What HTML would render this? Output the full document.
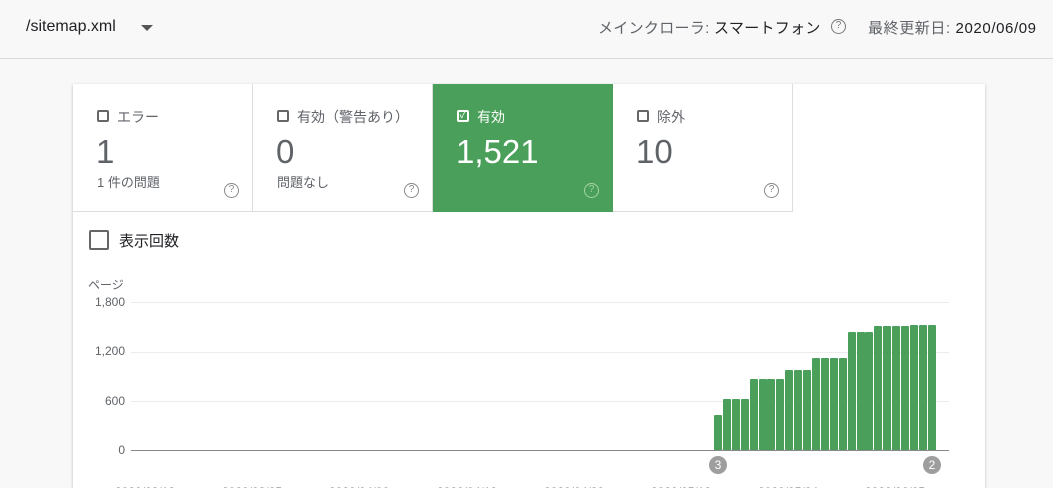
<!DOCTYPE html>
<html style="width:1053px;height:488px;overflow:hidden"><head><meta charset="utf-8"><style>
*{margin:0;padding:0;box-sizing:border-box}
body{width:1053px;height:488px;overflow:hidden;background:#f8f8f8;font-family:"Liberation Sans","Noto Sans CJK JP",sans-serif;position:relative;color:#202124}
.a{position:absolute;white-space:nowrap}
.top{position:absolute;left:0;top:0;width:1053px;height:59px;border-bottom:1px solid #dadada;background:#f8f8f8}
.card{position:absolute;left:73px;top:84px;width:912px;height:404px;background:#fff;box-shadow:0 1px 3px rgba(0,0,0,.25)}
.tile{position:absolute;top:0;height:128px;width:180px;border-right:1px solid #ddd;border-bottom:1px solid #ddd}
.cb{position:absolute;left:24px;top:26px;width:12px;height:12px;border:2px solid #666;border-radius:2px}
.lbl{position:absolute;left:44px;top:23px;font-size:14px;color:#5f6368}
.num{position:absolute;left:23px;top:49px;font-size:33px;color:#5f6368}
.sub{position:absolute;left:24px;top:88px;font-size:13px;color:#5f6368}
.q{position:absolute;left:151px;top:99px;width:15px;height:15px;border:1.5px solid #888;border-radius:50%;font-size:10px;line-height:12px;text-align:center;color:#888}
.g{position:absolute;left:131px;width:818px;height:1px;background:#ececec}
.yl{position:absolute;width:60px;left:65px;text-align:right;font-size:12px;color:#5f6368}
.bar{position:absolute;width:8px;background:#4a9f5a;border-radius:1px 1px 0 0}
.xl{position:absolute;top:485px;font-size:12px;color:#5f6368}
.mk{position:absolute;top:456px;width:18px;height:18px;border-radius:50%;background:#9e9e9e;color:#fff;font-size:12px;line-height:18px;text-align:center}
</style></head><body>
<div class="top">
<div class="a" style="left:26px;top:18px;font-size:16px;color:#202124">/sitemap.xml</div>
<div class="a" style="left:141px;top:25px;width:0;height:0;border-left:6px solid transparent;border-right:6px solid transparent;border-top:6px solid #555"></div>
<div class="a" style="left:598px;top:17px;font-size:15px;color:#5f6368;letter-spacing:0.3px">メインクローラ: <span style="color:#202124">スマートフォン</span></div>
<div class="a" style="left:831px;top:19px;width:15px;height:15px;border:1.5px solid #777;border-radius:50%;font-size:10px;line-height:12px;text-align:center;color:#777">?</div>
<div class="a" style="left:868px;top:17px;font-size:15px;color:#5f6368;letter-spacing:0.6px">最終更新日: <span style="color:#202124">2020/06/09</span></div>
</div>
<div class="card">
<div class="tile" style="left:0"><div class="cb"></div><div class="lbl">エラー</div><div class="num">1</div><div class="sub">1 件の問題</div><div class="q">?</div></div>
<div class="tile" style="left:180px"><div class="cb"></div><div class="lbl">有効（警告あり）</div><div class="num">0</div><div class="sub">問題なし</div><div class="q">?</div></div>
<div class="tile" style="left:360px;background:#4a9f5a;border-color:#4a9f5a"><div class="cb" style="border-color:#fff;color:#fff;font-size:10px;line-height:8px;text-align:center">✓</div><div class="lbl" style="color:#fff">有効</div><div class="num" style="color:#fff">1,521</div><div class="q" style="border-color:#a5d6a7;color:#a5d6a7">?</div></div>
<div class="tile" style="left:540px"><div class="cb"></div><div class="lbl">除外</div><div class="num">10</div><div class="q">?</div></div>
</div>
<div class="a" style="left:89px;top:230px;width:20px;height:20px;border:2px solid #666;border-radius:2px"></div>
<div class="a" style="left:119px;top:230px;font-size:15px;color:#202124">表示回数</div>
<div class="a" style="left:88px;top:276px;font-size:12px;color:#5f6368">ページ</div>
<div class="g" style="top:302px"></div><div class="g" style="top:352px"></div><div class="g" style="top:401px"></div>
<div class="g" style="top:450px;background:#888"></div>
<div class="yl" style="top:295px">1,800</div><div class="yl" style="top:344px">1,200</div><div class="yl" style="top:394px">600</div><div class="yl" style="top:443px">0</div>
<div class="mk" style="left:709px">3</div><div class="mk" style="left:923px">2</div>
<div class="xl" style="left:115px">2020/03/13</div><div class="xl" style="left:222px">2020/03/25</div><div class="xl" style="left:329px">2020/04/06</div><div class="xl" style="left:437px">2020/04/18</div><div class="xl" style="left:544px">2020/04/30</div><div class="xl" style="left:651px">2020/05/12</div><div class="xl" style="left:758px">2020/05/24</div><div class="xl" style="left:865px">2020/06/05</div>
<div class="bar" style="left:714px;top:415px;height:35px"></div>
<div class="bar" style="left:723px;top:399px;height:51px"></div>
<div class="bar" style="left:732px;top:399px;height:51px"></div>
<div class="bar" style="left:741px;top:399px;height:51px"></div>
<div class="bar" style="left:750px;top:379px;height:71px"></div>
<div class="bar" style="left:759px;top:379px;height:71px"></div>
<div class="bar" style="left:767px;top:379px;height:71px"></div>
<div class="bar" style="left:776px;top:379px;height:71px"></div>
<div class="bar" style="left:785px;top:370px;height:80px"></div>
<div class="bar" style="left:794px;top:370px;height:80px"></div>
<div class="bar" style="left:803px;top:370px;height:80px"></div>
<div class="bar" style="left:812px;top:358px;height:92px"></div>
<div class="bar" style="left:821px;top:358px;height:92px"></div>
<div class="bar" style="left:830px;top:358px;height:92px"></div>
<div class="bar" style="left:839px;top:358px;height:92px"></div>
<div class="bar" style="left:848px;top:332px;height:118px"></div>
<div class="bar" style="left:857px;top:332px;height:118px"></div>
<div class="bar" style="left:865px;top:332px;height:118px"></div>
<div class="bar" style="left:874px;top:326px;height:124px"></div>
<div class="bar" style="left:883px;top:326px;height:124px"></div>
<div class="bar" style="left:892px;top:326px;height:124px"></div>
<div class="bar" style="left:901px;top:326px;height:124px"></div>
<div class="bar" style="left:910px;top:325px;height:125px"></div>
<div class="bar" style="left:919px;top:325px;height:125px"></div>
<div class="bar" style="left:928px;top:325px;height:125px"></div>
</body></html>
